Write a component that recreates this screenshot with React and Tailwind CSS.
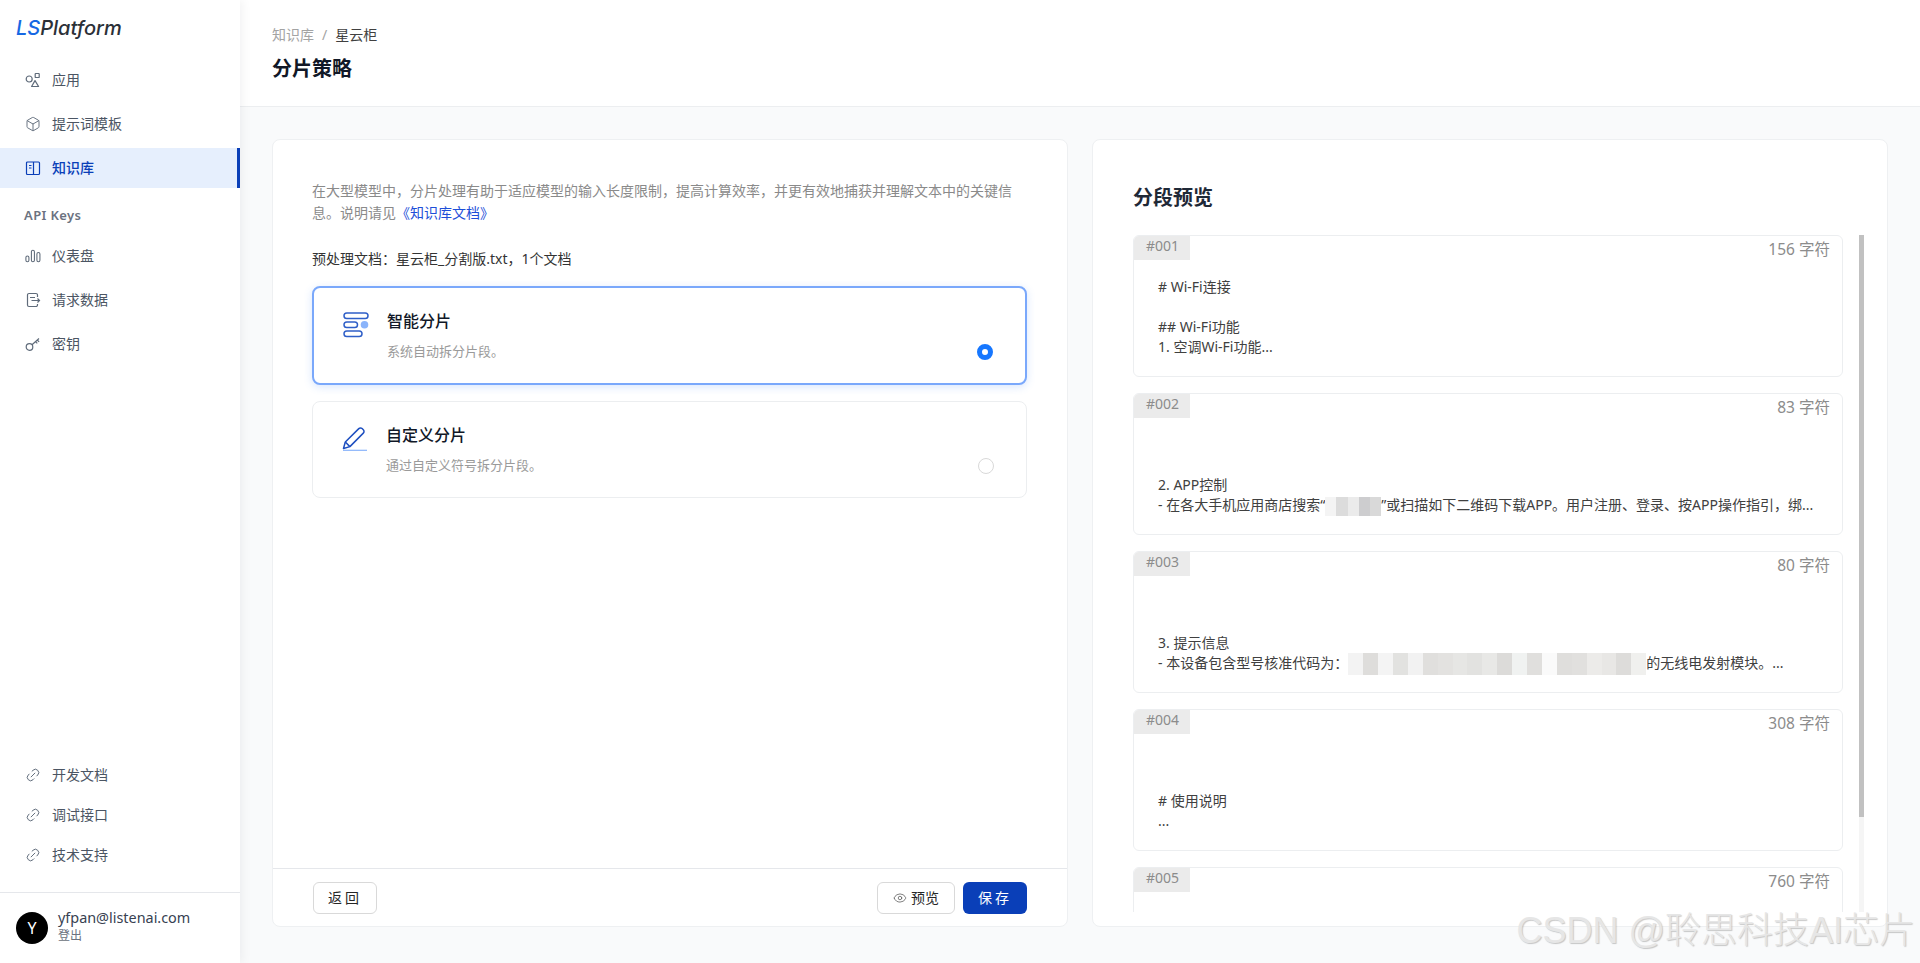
import React from 'react';
import { Box, Eye, Link2 } from 'lucide-react';

const FONT = "font-['Noto_Sans','Noto_Sans_CJK_SC',sans-serif]";

const AppsIcon = () => (
  <svg viewBox="0 0 16 16" className="w-4 h-4" fill="none" stroke="currentColor" strokeWidth="1.2">
    <circle cx="4.2" cy="7" r="3" />
    <rect x="10.2" y="1.5" width="4" height="4" rx="0.6" />
    <path d="M10 8.6l3.6 5.9H6.6z" strokeLinejoin="round" />
  </svg>
);

const BookIcon = () => (
  <svg viewBox="0 0 16 16" className="w-4 h-4" fill="none" stroke="currentColor" strokeWidth="1.2">
    <rect x="1.5" y="2" width="13" height="12.5" rx="1" />
    <path d="M8.5 2v12.5M4 5.5h2.5M4 8h2.5" />
  </svg>
);

const BarsIcon = () => (
  <svg viewBox="0 0 18 16" className="w-[18px] h-4" fill="none" stroke="currentColor" strokeWidth="1.2">
    <rect x="1" y="8" width="3.4" height="6.5" rx="1.7" />
    <rect x="7.2" y="1.5" width="3.4" height="13" rx="1.7" />
    <rect x="13.4" y="4" width="3.4" height="10.5" rx="1.7" />
  </svg>
);

const RequestIcon = () => (
  <svg viewBox="0 0 16 16" className="w-4 h-4" fill="none" stroke="currentColor" strokeWidth="1.2">
    <path d="M12.5 5V3a1.5 1.5 0 0 0-1.5-1.500H4A1.500 1.500 0 0 0 2.500 3v10A1.500 1.500 0 0 0 4 14.500h7a1.500 1.500 0 0 0 1.500-1.500v-1" />
    <path d="M5 5.500h5M6.500 8.500h8M12.500 6.500l2 2-2 2" />
  </svg>
);

const KeyIcon = () => (
  <svg viewBox="0 0 16 16" className="w-4 h-4" fill="none" stroke="currentColor" strokeWidth="1.2">
    <circle cx="4.500" cy="11" r="3.300" />
    <path d="M7 8.700l7-6.200M10.500 5.600l1.800 1.800M12.300 4l1.800 1.800" />
  </svg>
);

const SmartIcon = () => (
  <svg viewBox="0 0 26 26" className="w-[26px] h-[26px]" fill="none">
    <rect x="1" y="1" width="24" height="5.500" rx="2.750" stroke="#2f5fc8" strokeWidth="1.500" />
    <rect x="1" y="10" width="13.500" height="5.500" rx="2.750" stroke="#2f5fc8" strokeWidth="1.500" />
    <rect x="1" y="19" width="18" height="5.500" rx="2.750" stroke="#2f5fc8" strokeWidth="1.500" />
    <circle cx="21.500" cy="12.700" r="3.800" fill="#8ab4fb" />
  </svg>
);

const PenIcon = () => (
  <svg viewBox="0 0 26 26" className="w-[26px] h-[26px]" fill="none">
    <path d="M1.500 22.500l1.800-6.500L16.800 2.600a2.300 2.300 0 0 1 3.300 0l1.200 1.200a2.300 2.300 0 0 1 0 3.300L7.900 20.600z" stroke="#1e4fc0" strokeWidth="1.500" strokeLinejoin="round" />
    <path d="M3.300 16l4.600 4.600" stroke="#1e4fc0" strokeWidth="1.500" />
    <path d="M1 24.300h24" stroke="#8ab4fb" strokeWidth="1.200" />
  </svg>
);

const NavItem = ({ icon, label, active }) => (
  <div
    className={`relative h-10 flex items-center pl-[25px] gap-[11px] text-sm ${
      active ? 'bg-[#e6effd] text-[#0a3fb8] font-medium' : 'text-[#4b5563]'
    }`}
  >
    <span className={`w-[16px] flex justify-center ${active ? 'text-[#0a3fb8]' : 'text-[#5f6b7a]'}`}>{icon}</span>
    {label}
    {active && <span className="absolute right-0 top-0 bottom-0 w-[3px] bg-[#0a3fb8]" />}
  </div>
);

const Sidebar = () => (
  <aside className="relative z-10 w-[240px] shrink-0 h-full bg-white flex flex-col shadow-[2px_0_10px_rgba(17,24,39,0.06)]">
    <div className="h-[60px] pl-[16px] pt-[14px] font-['Inter',sans-serif] italic text-[20px] leading-[28px] font-medium text-[#2b3038]">
      <span className="text-[#1668e3]">LS</span>Platform
    </div>
    <div className="flex flex-col gap-[4px]">
      <NavItem icon={<AppsIcon />} label="应用" />
      <NavItem icon={<Box size={16} strokeWidth={1.4} />} label="提示词模板" />
      <NavItem icon={<BookIcon />} label="知识库" active />
    </div>
    <div className="pl-[24px] mt-[17px] mb-[11px] text-[13px] leading-5 font-semibold text-[#6b7280] tracking-[0.4px]">API Keys</div>
    <div className="flex flex-col gap-[4px]">
      <NavItem icon={<BarsIcon />} label="仪表盘" />
      <NavItem icon={<RequestIcon />} label="请求数据" />
      <NavItem icon={<KeyIcon />} label="密钥" />
    </div>
    <div className="mt-auto flex flex-col pb-[17px]">
      <NavItem icon={<Link2 size={16} strokeWidth={1.4} className="-rotate-45" />} label="开发文档" />
      <NavItem icon={<Link2 size={16} strokeWidth={1.4} className="-rotate-45" />} label="调试接口" />
      <NavItem icon={<Link2 size={16} strokeWidth={1.4} className="-rotate-45" />} label="技术支持" />
    </div>
    <div className="h-[71px] border-t border-[#e5e7eb] flex items-center pl-[16px] gap-[10px]">
      <div className="w-8 h-8 rounded-full bg-black text-white flex items-center justify-center text-base">Y</div>
      <div className="flex flex-col -mt-[2px]">
        <span className="text-[14.4px] leading-[18px] text-[#374151]">yfpan@listenai.com</span>
        <span className="text-xs leading-[18px] text-[#6b7280]">登出</span>
      </div>
    </div>
  </aside>
);

const OptionCard = ({ icon, title, desc, selected }) => (
  <div
    className={`relative rounded-[8px] bg-white pl-[29px] ${
      selected
        ? 'h-[99px] border-2 border-[#7aa8fb] pt-[16px] shadow-[0_2px_8px_rgba(59,130,246,0.2)]'
        : 'h-[97px] border border-[#eceef0] pt-[16px]'
    }`}
  >
    <div className="flex gap-[18px]">
      <div className="pt-[8px]">{icon}</div>
      <div>
        <div className="text-base leading-[24px] font-medium text-[#111827] mt-[5px]">{title}</div>
        <div className="text-[13px] leading-[20px] text-[#9a9a9a] mt-[8px]">{desc}</div>
      </div>
    </div>
    <span
      className={`absolute right-[32px] top-[56px] w-4 h-4 rounded-full bg-white ${
        selected ? 'border-[5px] border-[#1677ff]' : 'border border-[#d9d9d9]'
      }`}
    />
  </div>
);

const Button = ({ children, className }) => (
  <button className={`h-8 rounded-[6px] text-sm flex items-center justify-center ${className}`}>{children}</button>
);

// redacted bits in the source text, drawn as mosaic cells
const MOSAIC_SHORT = ['bg-[#f4f4f4]', 'bg-[#dcdcdc]', 'bg-[#ebebeb]', 'bg-[#cdcdcf]', 'bg-[#d9d9d9]'];
const MOSAIC_LONG = [
  'bg-[#f3f3f3]', 'bg-[#dedddb]', 'bg-[#f4f4f4]', 'bg-[#e2e2e0]', 'bg-[#f2f2f2]', 'bg-[#e0dfdd]', 'bg-[#e3e2e0]',
  'bg-[#e6e6e4]', 'bg-[#e2e2e0]', 'bg-[#e8e8e6]', 'bg-[#dcdbd9]', 'bg-[#f0f2f1]', 'bg-[#e0dfdd]', 'bg-[#fafafa]',
  'bg-[#dfdedc]', 'bg-[#e1e0de]', 'bg-[#ecebe9]', 'bg-[#e8e7e5]', 'bg-[#dddcda]', 'bg-[#f0f0ee]',
];

const Mosaic = ({ cells, className }) => (
  <span className={`inline-flex align-middle -my-1 ${className}`}>
    {cells.map((c, i) => (
      <span key={i} className={`flex-1 ${c}`} />
    ))}
  </span>
);

const Segment = ({ id, count, lines }) => (
  <div className="relative shrink-0 rounded-[6px] border border-[#eceef0] bg-white h-[142px] overflow-hidden">
    <div className="flex justify-between">
      <span className="w-[56px] h-6 bg-[#ebebeb] text-[#8c8c8c] text-[14px] leading-[20px] pl-[12px]">{id}</span>
      <span className="text-[15.5px] text-[#8c8c8c] leading-6 pr-[12px] pt-[1px]">{count} 字符</span>
    </div>
    <div className="pl-[24px] pt-[16px] text-sm leading-5 text-[#404040] whitespace-nowrap">
      {lines.map((l, i) => (
        <div key={i} className="h-5">{l}</div>
      ))}
    </div>
  </div>
);

const App = () => (
  <div className={`${FONT} relative flex h-screen w-full overflow-hidden bg-[#f9fafb]`}>
    <Sidebar />
    <main className="flex-1 min-w-0 flex flex-col">
      <header className="h-[107px] shrink-0 bg-white border-b border-[#eceef0] pl-[32px] pt-[24px]">
        <div className="text-sm leading-[22px] flex items-center gap-[8px]">
          <span className="text-[#a3a3a3]">知识库</span>
          <span className="text-[#a3a3a3]">/</span>
          <span className="text-[#404040]">星云柜</span>
        </div>
        <h1 className="text-xl leading-[28px] font-bold text-[#111827] mt-[9px]">分片策略</h1>
      </header>

      <div className="flex-1 min-h-0 grid grid-cols-2 grid-rows-[minmax(0,1fr)] gap-[24px] px-[32px] pt-[32px] pb-[36px]">
        <section className="min-w-0 min-h-0 flex flex-col rounded-[8px] bg-white border border-[#eef0f2]">
          <div className="flex-1 pl-[39px] pr-[40px] pt-[40px]">
            <p className="text-sm leading-[22px] text-[#8a8a8a]">
              在大型模型中，分片处理有助于适应模型的输入长度限制，提高计算效率，并更有效地捕获并理解文本中的关键信息。说明请见
              <span className="text-[#1d4ed8]">《知识库文档》</span>
            </p>
            <p className="text-sm leading-[22px] text-[#333333] mt-[24px]">预处理文档：星云柜_分割版.txt，1个文档</p>
            <div className="flex flex-col gap-[16px] mt-[16px]">
              <OptionCard icon={<SmartIcon />} title="智能分片" desc="系统自动拆分片段。" selected />
              <OptionCard icon={<PenIcon />} title="自定义分片" desc="通过自定义符号拆分片段。" />
            </div>
          </div>
          <div className="h-[58px] shrink-0 border-t border-[#e5e7eb] flex items-center justify-between pl-[40px] pr-[40px]">
            <Button className="w-[64px] border border-[#d9d9d9] text-[#262626] tracking-[3px]">返回</Button>
            <div className="flex gap-[8px]">
              <Button className="w-[78px] border border-[#d9d9d9] text-[#262626] gap-[4px]">
                <Eye size={14} strokeWidth={1.3} className="text-[#595959]" />
                预览
              </Button>
              <Button className="w-[64px] bg-[#0a3fb8] text-white tracking-[3px]">保存</Button>
            </div>
          </div>
        </section>

        <section className="min-w-0 min-h-0 flex flex-col rounded-[8px] bg-white border border-[#eef0f2] pl-[40px] pr-[23px]">
          <h2 className="text-xl leading-[28px] font-bold text-[#1f2937] mt-[44px]">分段预览</h2>
          <div className="flex-1 min-h-0 flex gap-[16px] mt-[23px] mb-[14px]">
            <div className="flex-1 min-w-0 flex flex-col gap-[16px] overflow-hidden">
              <Segment id="#001" count={156} lines={['# Wi-Fi连接', '', '## Wi-Fi功能', '1. 空调Wi-Fi功能...']} />
              <Segment
                id="#002"
                count={83}
                lines={[
                  '',
                  '',
                  '2. APP控制',
                  <>
                    - 在各大手机应用商店搜索“
                    <Mosaic cells={MOSAIC_SHORT} className="w-[56px] h-[19px]" />
                    ”或扫描如下二维码下载APP。用户注册、登录、按APP操作指引，绑...
                  </>,
                ]}
              />
              <Segment
                id="#003"
                count={80}
                lines={[
                  '',
                  '',
                  '3. 提示信息',
                  <>
                    - 本设备包含型号核准代码为：
                    <Mosaic cells={MOSAIC_LONG} className="w-[298px] h-[22px]" />
                    的无线电发射模块。...
                  </>,
                ]}
              />
              <Segment id="#004" count={308} lines={['', '', '# 使用说明', '...']} />
              <Segment id="#005" count={760} lines={[]} />
            </div>
            <div className="w-[5px] shrink-0 bg-[#f5f5f5]">
              <div className="h-[582px] bg-[#c1c1c1]" />
            </div>
          </div>
        </section>
      </div>
    </main>

    <div className="absolute right-[5px] bottom-[11px] font-['Liberation_Sans','Noto_Sans_CJK_SC',sans-serif] font-light text-[36px] leading-[42px] text-[#e6e6e6] [text-shadow:1px_1px_1px_rgba(120,120,120,0.4)] whitespace-nowrap">
      CSDN @聆思科技AI芯片
    </div>
  </div>
);

export default App;
